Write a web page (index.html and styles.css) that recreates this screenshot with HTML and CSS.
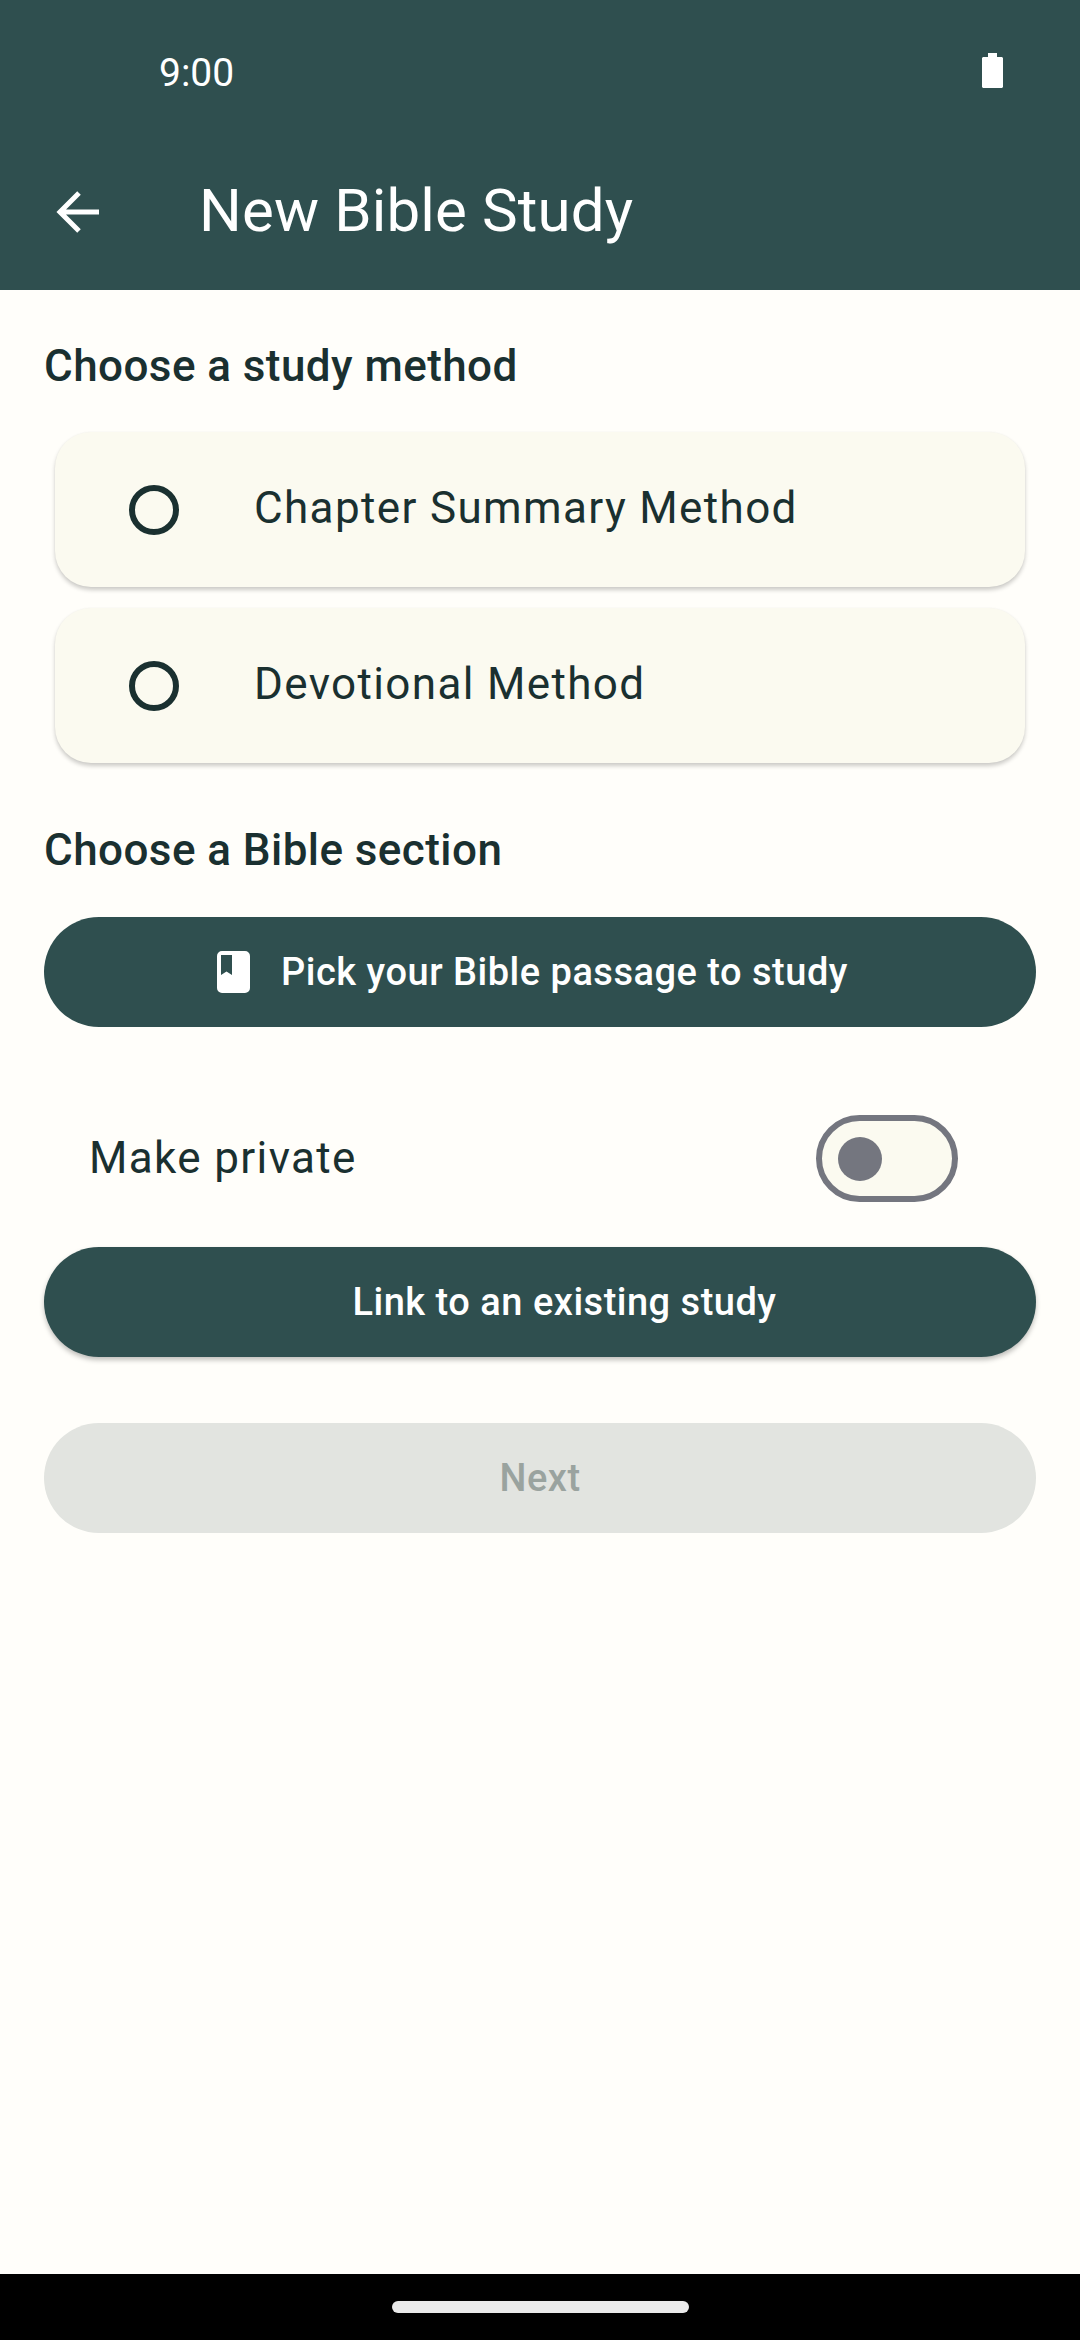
FILE: index.html
```html
<!DOCTYPE html>
<html lang="en">
<head>
<meta charset="utf-8">
<title>New Bible Study</title>
<link rel="stylesheet" href="styles.css">
</head>
<body>
<div class="app">
  <header class="appbar">
    <div class="status">
      <span class="time">9:00</span>
      <svg class="battery" width="21" height="35" viewBox="0 0 21 35"><path d="M6 0h9v4h5l1 1v29l-1 1H1l-1-1V5l1-1h5z" fill="#fff"/></svg>
    </div>
    <div class="toolbar">
      <svg class="back" width="46" height="44" viewBox="0 0 46 44"><path d="M44 22H5M24 3 5 22l19 19" fill="none" stroke="#fff" stroke-width="5" stroke-linecap="butt" stroke-linejoin="miter"/></svg>
      <h1 class="title">New Bible Study</h1>
    </div>
  </header>
  <main class="content">
    <h2 class="section first">Choose a study method</h2>
    <div class="cards">
      <div class="card"><span class="radio"></span><span class="label">Chapter Summary Method</span></div>
      <div class="card"><span class="radio"></span><span class="label">Devotional Method</span></div>
    </div>
    <h2 class="section second">Choose a Bible section</h2>
    <button class="btn pick">
      <svg class="book" width="33" height="42" viewBox="0 0 33 42"><path fill-rule="evenodd" d="M5 0h23a5 5 0 0 1 5 5v32a5 5 0 0 1-5 5H5a5 5 0 0 1-5-5V5a5 5 0 0 1 5-5zm-1 4v20l5.500-3.500L15 24V4z" fill="#fff"/></svg>
      <span>Pick your Bible passage to study</span>
    </button>
    <div class="row">
      <span class="label">Make private</span>
      <span class="switch"><span class="thumb"></span></span>
    </div>
    <button class="btn link">Link to an existing study</button>
    <button class="btn next" disabled>Next</button>
  </main>
  <footer class="nav"><span class="handle"></span></footer>
</div>
</body>
</html>
```
FILE: styles.css
```css
* { box-sizing: border-box; }
html, body { margin: 0; padding: 0; }
body { font-family: Roboto, "Noto Sans", sans-serif; background: #fffefa; color: #1a3030; }
.app { width: 1080px; height: 2340px; display: flex; flex-direction: column; overflow: hidden; }
.appbar { height: 290px; background: #2f4f4f; color: #fff; flex: none; }
.status { height: 144px; display: flex; align-items: center; justify-content: space-between; padding: 0 77px 0 159px; }
.time { font-size: 39px; margin-top: 2px; }
.battery { display: block; margin-bottom: 3px; }
.toolbar { height: 135px; display: flex; align-items: center; padding-left: 55px; }
.back { display: block; flex: none; }
.title { margin: 0 0 2px 98px; font-size: 60px; font-weight: 400; letter-spacing: 0.15px; }
.content { flex: 1; padding: 0 44px; }
.section { margin: 0; font-size: 44px; font-weight: 500; line-height: 60px; letter-spacing: 0.43px; }
.section.first { margin-top: 46px; }
.section.second { margin-top: 57px; }
.cards { margin-top: 36px; padding: 0 11px; display: flex; flex-direction: column; gap: 21px; }
.card { height: 155px; border-radius: 36px; background: #fbfaf0; display: flex; align-items: center; padding-left: 74px; box-shadow: 0 3px 4px rgba(0,0,0,.2), 0 0 2px rgba(0,0,0,.04); }
.radio { width: 50px; height: 50px; border: 6px solid #1a3030; border-radius: 50%; flex: none; margin-right: 75px; }
.label { font-size: 44px; letter-spacing: 1.36px; margin-bottom: 2px; }
.card .label { margin-bottom: 3px; }
.btn { display: flex; align-items: center; justify-content: center; width: 100%; height: 110px; border: 0; border-radius: 55px; font-family: inherit; font-size: 38px; font-weight: 500; padding: 0; letter-spacing: 0.5px; }
.pick { margin-top: 37px; background: #2f4f4f; color: #fff; gap: 31px; padding-right: 15px; }
.book { display: block; flex: none; }
.row { margin-top: 88px; height: 87px; display: flex; align-items: center; justify-content: space-between; padding: 0 78px 0 45px; }
.switch { width: 142px; height: 87px; border: 6px solid #74767f; border-radius: 44px; background: #fbfaf0; display: flex; align-items: center; padding-left: 16px; flex: none; }
.thumb { width: 44px; height: 44px; border-radius: 50%; background: #74767f; display: block; }
.link { margin-top: 45px; background: #2f4f4f; color: #fff; padding-left: 49px; box-shadow: 0 3px 5px rgba(0,0,0,.25); }
.next { margin-top: 66px; background: #e2e4e0; color: #9aa39f; }
.nav { height: 66px; background: #000; flex: none; display: flex; justify-content: center; padding-top: 27px; }
.handle { width: 297px; height: 12px; border-radius: 6px; background: #eaeaea; display: block; }
```
